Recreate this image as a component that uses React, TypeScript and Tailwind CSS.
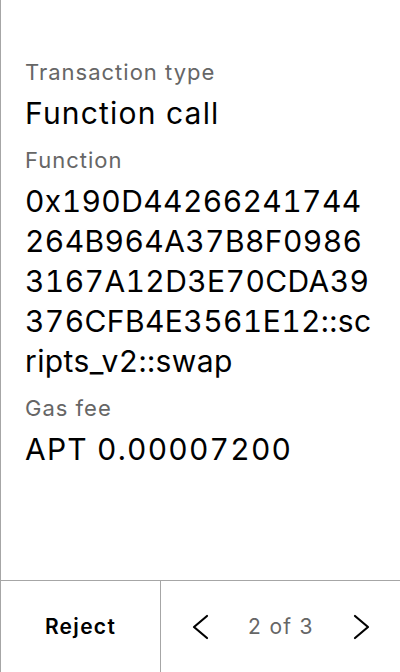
import React from 'react';

const fields = [
  { label: 'Transaction type', value: 'Function call', hex: false },
  {
    label: 'Function',
    value: '0x190D44266241744264B964A37B8F09863167A12D3E70CDA39376CFB4E3561E12::scripts_v2::swap',
    hex: true,
  },
  { label: 'Gas fee', value: 'APT 0.00007200', hex: false },
];

function Chevron({ dir }: { dir: 'left' | 'right' }) {
  return (
    <svg width="18" height="26" viewBox="0 0 18 26" fill="none" stroke="#000" strokeWidth="2.2" strokeLinecap="round" strokeLinejoin="round">
      {dir === 'left' ? <polyline points="15,2 2,13 15,24" /> : <polyline points="3,2 16,13 3,24" />}
    </svg>
  );
}

export default function App() {
  return (
    <div className="h-[672px] w-[400px] bg-white border-l border-[#a6a6a6] flex flex-col font-['Inter',sans-serif] text-black">
      {/* Details */}
      <main className="flex-1 px-6 pt-[58px] flex flex-col gap-[13px]">
        {fields.map((f) => (
          <div key={f.label}>
            <div className="text-[22px] leading-[28px] tracking-[1px] text-[#666]">{f.label}</div>
            <div
              className={`mt-[7px] text-[30px] leading-[40px] tabular-nums break-all ${
                f.hex ? 'tracking-[0.4px]' : 'tracking-[1.2px]'
              }`}
            >
              {f.value}
            </div>
          </div>
        ))}
      </main>

      {/* Footer */}
      <footer className="h-[92px] border-t border-[#a6a6a6] flex">
        <button className="w-[160px] border-r border-[#a6a6a6] flex items-center justify-center text-[21px] font-semibold tracking-[1.3px]">
          Reject
        </button>
        <div className="flex-1 flex items-center justify-between pl-[31px] pr-[30px]">
          <Chevron dir="left" />
          <span className="text-[21px] tracking-[1.3px] text-[#666]">2 of 3</span>
          <Chevron dir="right" />
        </div>
      </footer>
    </div>
  );
}
